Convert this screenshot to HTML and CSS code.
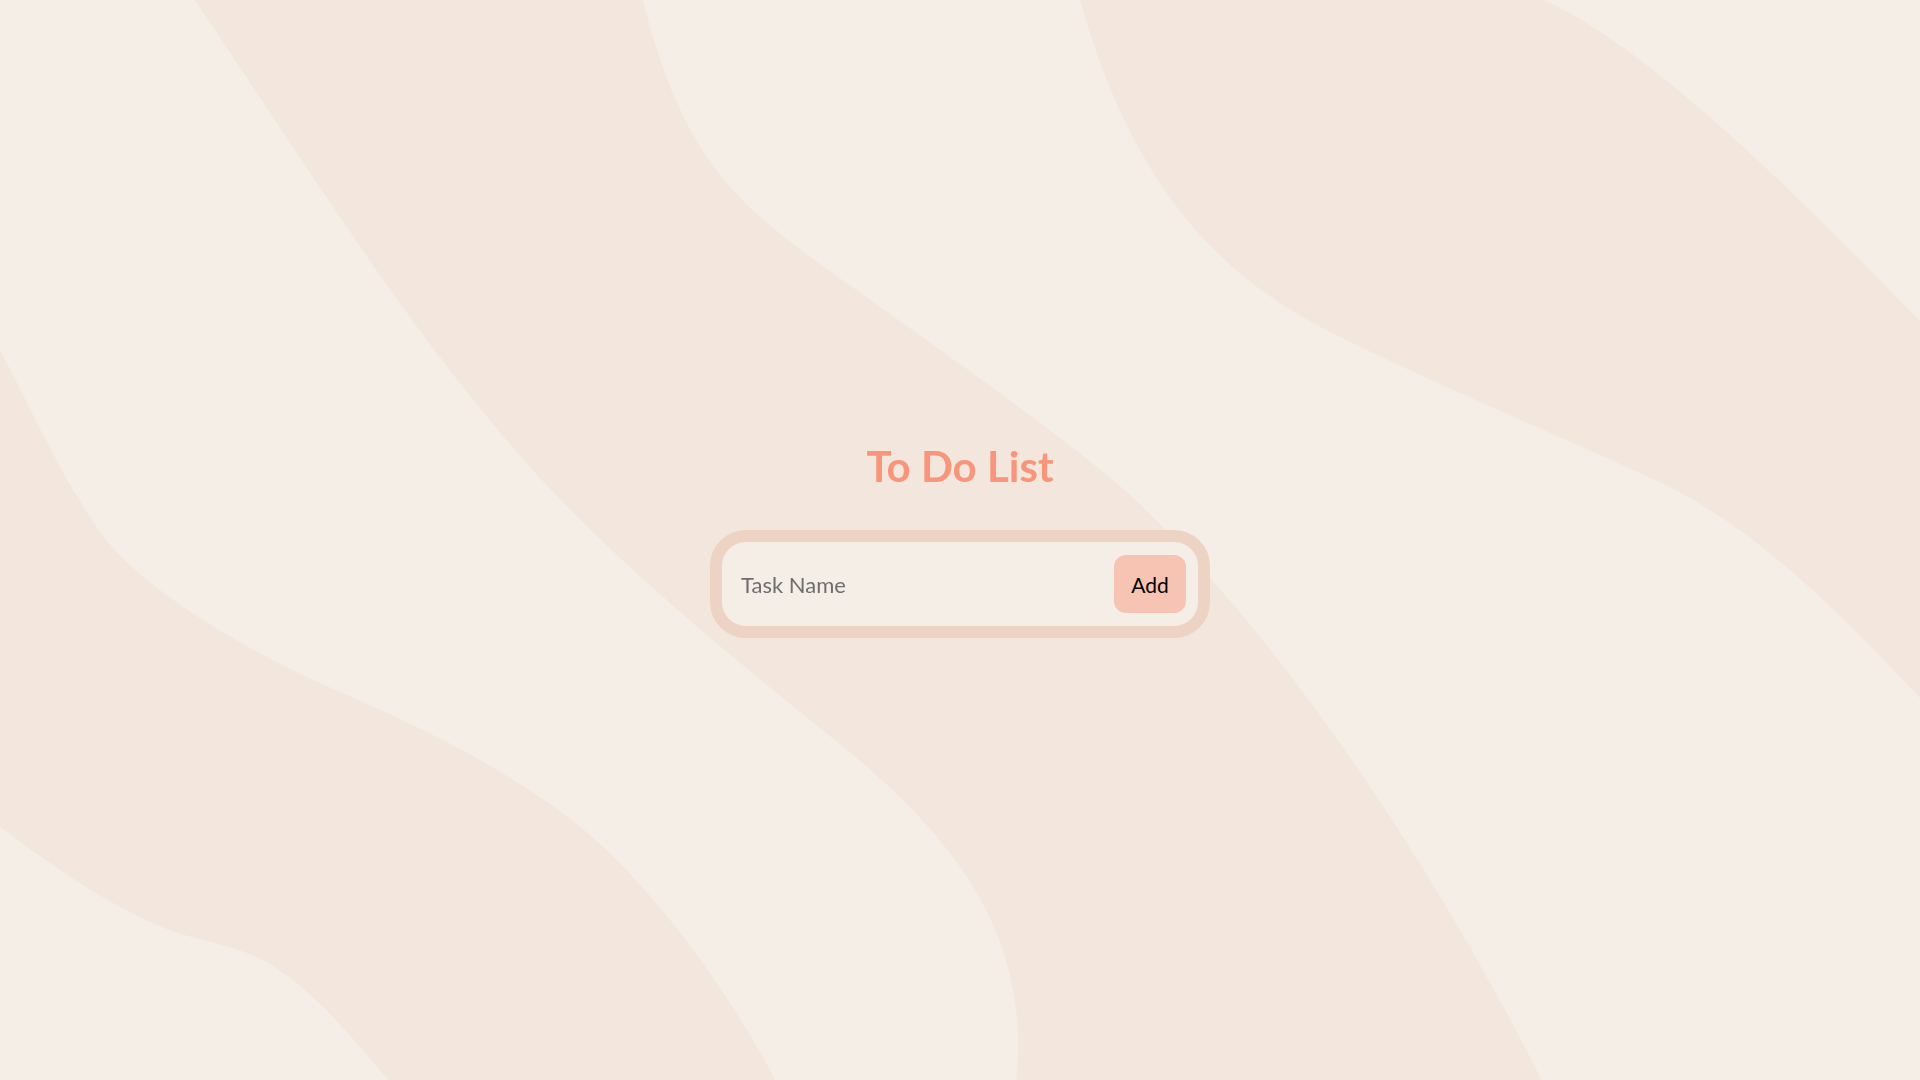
FILE: index.html
```html
<!DOCTYPE html>
<html lang="en">
<head>
<meta charset="utf-8">
<title>To Do List</title>
<link rel="stylesheet" href="styles.css">
</head>
<body>
<svg class="bg" viewBox="0 0 1568 882" preserveAspectRatio="none" xmlns="http://www.w3.org/2000/svg">
  <rect width="1568" height="882" fill="#F5EEE6"/>
  <path fill="#F3E6DD" d="M159,0 C251,135 342,286 451,401 C517.5,471 597.8,537 679,602 C779,682 842,762 830,882 L1259,882 C1199,762 1074,548 927,408 C885,368 757,278 694,233 C610,173 560,140 525,0 Z"/>
  <path fill="#F3E6DD" d="M0,286 C27,336 47.5,386 83,436 C111.4,476 191,527 271,562 C331,588 398,619 458,663 C538,721 607.5,832 633,882 L317,882 C287,846 248,799 208,781 C184,770 161,768 137,759 C92,741.5 40,706 0,675 Z"/>
  <path fill="#F3E6DD" d="M882,0 C924,150 994,224 1084,270 C1175,316 1266,352 1356,394 C1436,432 1508,506 1568,570 L1568,262 C1508,202 1361,45 1261,0 Z"/>
</svg>
<main class="app">
  <h1 class="title">To Do List</h1>
  <div class="task-box">
    <input class="task-input" type="text" placeholder="Task Name">
    <button class="add-btn" type="button">Add</button>
  </div>
</main>
</body>
</html>
```

FILE: styles.css
```css
html, body {
  margin: 0;
  padding: 0;
  width: 100%;
  height: 100%;
}
body {
  font-family: "Lato", "Noto Sans", sans-serif;
  background: #F5EEE6;
  overflow: hidden;
}
.bg {
  position: fixed;
  top: 0;
  left: 0;
  width: 100vw;
  height: 100vh;
  z-index: 0;
}
.app {
  position: relative;
  z-index: 1;
  height: 100%;
  display: flex;
  flex-direction: column;
  align-items: center;
  justify-content: center;
  gap: 40px;
}
.title {
  margin: 0;
  font-size: 42px;
  line-height: 48px;
  font-weight: 700;
  color: #F9957A;
}
.task-box {
  box-sizing: border-box;
  width: 500px;
  height: 108px;
  border: 12px solid #EDD3C4;
  border-radius: 36px;
  background: #F5EEE7;
  padding: 12px;
  display: flex;
  align-items: center;
}
.task-input {
  flex: 1;
  min-width: 0;
  border: none;
  outline: none;
  background: transparent;
  font-family: inherit;
  font-size: 22px;
  color: #555;
  padding: 0 0 0 7px;
}
.task-input::placeholder {
  color: #6E6E6E;
}
.add-btn {
  width: 72px;
  height: 58px;
  border: none;
  border-radius: 12px;
  background: #F7C4B3;
  font-family: inherit;
  font-size: 21px;
  color: #000;
  cursor: pointer;
}
```
